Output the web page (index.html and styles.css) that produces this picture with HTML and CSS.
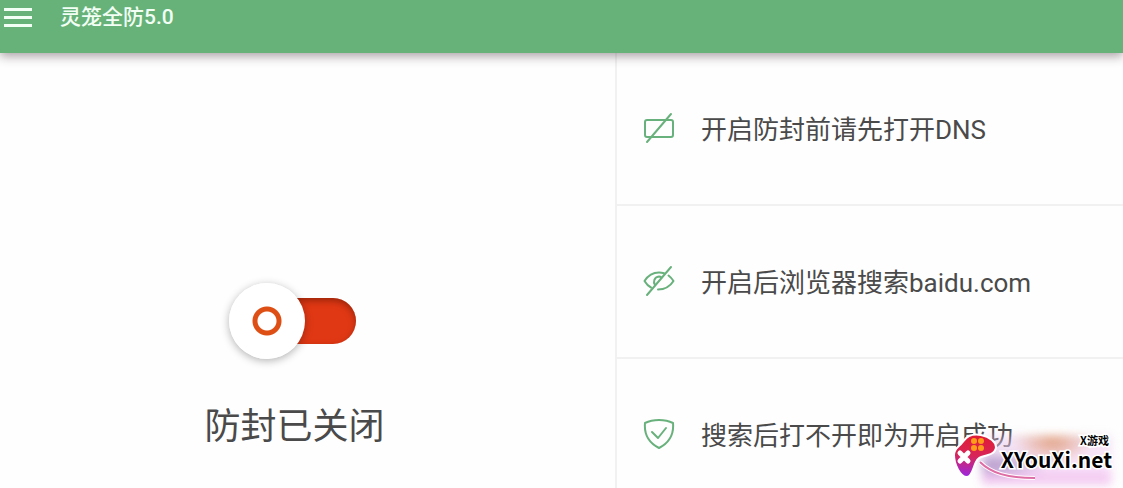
FILE: index.html
```
<!DOCTYPE html>
<html lang="zh-CN">
<head>
    <meta charset="UTF-8">
    <meta name="viewport" content="width=device-width, initial-scale=1.0">
    <title>灵笼全防5.0</title>
    <link rel="stylesheet" href="styles.css">
</head>
<body>

    <header class="toolbar">
        <button class="menu-btn" type="button" aria-label="菜单">
            <svg width="28" height="20" viewBox="0 0 28 20" fill="currentColor">
                <path d="M0 0h28v3H0zM0 8h28v3H0zM0 16h28v3H0z"/>
            </svg>
        </button>
        <h1 class="title">灵笼全防5.0</h1>
    </header>

    <main class="content">
        <section class="status">
            <input class="switch" type="checkbox" role="switch" id="guard">
            <label class="status-text" for="guard">防封已关闭</label>
        </section>

        <ul class="tips">
            <li class="tip">
                <svg class="tip-icon" viewBox="0 0 32 32">
                    <rect x="2" y="8" width="28" height="17" rx="2"/>
                    <path d="M4 30L28 2"/>
                </svg>
                <span>开启防封前请先打开DNS</span>
            </li>
            <li class="tip">
                <svg class="tip-icon" viewBox="0 0 32 32">
                    <path d="M8 22.500C5 21 3 18.500 1.500 16C5 10.500 10 7.500 16 7.500C18 7.500 19.500 7.800 21 8.300"/>
                    <path d="M25.500 10.500C27.500 12 29 13.700 30.500 16C27 21.500 22 24.500 15 24.500"/>
                    <path d="M12 20C10 17 11 12 16 11.500C17 11.500 17.500 11.600 18.500 12.500"/>
                    <path d="M4 30L28 2"/>
                </svg>
                <span>开启后浏览器搜索baidu.com</span>
            </li>
            <li class="tip">
                <svg class="tip-icon" viewBox="0 0 32 32">
                    <path d="M16 2C11 2 6 3 2 5C1 16 6 25 16 30C26 25 31 16 30 5C26 3 21 2 16 2Z"/>
                    <path d="M9 14L15 20L23 10"/>
                </svg>
                <span>搜索后打不开即为开启成功</span>
            </li>
        </ul>
    </main>

    <div class="watermark">
        <div class="haze"></div>
        <svg class="wire" width="60" height="20" viewBox="0 0 60 20" fill="none">
            <path d="M1 1C12 12 28 17 56 17" stroke="#fff" stroke-width="4"/>
            <path d="M1 1C12 12 28 17 56 17" stroke="#df6da5" stroke-width="2"/>
        </svg>
        <svg class="gamepad" width="46" height="48" viewBox="0 0 46 48">
            <defs>
                <linearGradient id="pad" x1="0.5" y1="0" x2="0.4" y2="1">
                    <stop offset="0" stop-color="#e01c34"/>
                    <stop offset="0.5" stop-color="#d82558"/>
                    <stop offset="1" stop-color="#9c27e0"/>
                </linearGradient>
            </defs>
            <path d="M17 4C24 1 34 3 40 8C47 14 44 21 36 23C30 25 26 25 24 30C21 36 20 45 15 45C8 45 2 32 2 23C2 17 6 15 9 12C12 9 13 6 17 4Z" fill="url(#pad)" stroke="#fff" stroke-width="2"/>
            <g fill="#ff9c1a">
                <circle cx="22" cy="9" r="3"/>
                <circle cx="29" cy="9" r="3"/>
                <circle cx="22" cy="16" r="3"/>
                <circle cx="29" cy="16" r="3"/>
            </g>
            <path d="M8 21L16 29M16 21L8 29" stroke="#fff" stroke-width="5" stroke-linecap="round"/>
        </svg>
        <div class="brand">
            <span class="brand-cn">X游戏</span>
            <span class="brand-url">XYouXi.net</span>
        </div>
    </div>

</body>
</html>
```
FILE: styles.css
```
* {
    box-sizing: border-box;
}
body {
    margin: 0;
    height: 100vh;
    display: flex;
    flex-direction: column;
    overflow: hidden;
    position: relative;
    font-family: Roboto, "Noto Sans CJK SC", sans-serif;
    color: #4a4a4a;
    background-color: #fefefe;
}
.toolbar {
    display: flex;
    align-items: center;
    gap: 28px;
    flex: none;
    padding: 0 4px 18px;
    background-color: #67b279;
    color: #f2fff4;
    box-shadow: 0 3px 10px rgba(60, 40, 50, 0.45);
    z-index: 1;
}
.menu-btn {
    display: flex;
    padding: 0;
    border: none;
    background: none;
    color: inherit;
    cursor: pointer;
}
.title {
    margin: 0;
    font-size: 21px;
    font-weight: 500;
    line-height: 35px;
}
.content {
    flex: 1;
    min-height: 0;
    display: grid;
    grid-template-columns: 615fr 508fr;
}
.status {
    display: flex;
    flex-direction: column;
    align-items: center;
    gap: 42px;
    padding: 230px 26px 0 0;
}
.switch {
    appearance: none;
    position: relative;
    width: 127px;
    height: 76px;
    margin: 0 4px 0 0;
    cursor: pointer;
}
/* track */
.switch::before {
    content: "";
    position: absolute;
    inset: 15px 0 15px 20px;
    border-radius: 23px;
    background-color: #e03814;
    box-shadow: inset 0 3px 6px rgba(90, 20, 0, 0.5);
}
/* knob */
.switch::after {
    content: "";
    position: absolute;
    top: 0;
    left: 0;
    width: 76px;
    height: 76px;
    border-radius: 50%;
    background: radial-gradient(circle, #fff 9px, #dd4f14 10px, #dd4f14 14px, #fff 15px);
    box-shadow: 0 2px 9px rgba(0, 0, 0, 0.3);
}
.status-text {
    font-size: 36px;
    line-height: 52px;
}
.tips {
    margin: 0;
    padding: 0;
    list-style: none;
    border-left: 2px solid #f1f1f1;
}
.tip {
    display: flex;
    align-items: center;
    gap: 26px;
    height: 153px;
    padding: 0 0 2px 26px;
    border-bottom: 2px solid #f1f1f1;
    font-size: 26px;
    white-space: nowrap;
}
.tip-icon {
    flex: none;
    width: 32px;
    height: 32px;
    fill: none;
    stroke: #69b17c;
    stroke-width: 2;
    stroke-linecap: round;
    stroke-linejoin: round;
}
/* site mark over the bottom right corner */
.watermark {
    position: absolute;
    right: 0;
    bottom: 0;
    width: 171px;
    height: 56px;
    z-index: 2;
}
.haze {
    position: absolute;
    inset: 4px 12px 4px 30px;
    background:
        radial-gradient(ellipse at 55% 5%, rgba(220, 140, 95, 0.8), transparent 40%),
        radial-gradient(ellipse at 8% 60%, rgba(125, 95, 165, 0.6), transparent 35%),
        linear-gradient(rgba(222, 178, 222, 0.4), rgba(248, 225, 250, 0.8) 60%, rgba(236, 170, 232, 0.8));
    filter: blur(5px);
}
.gamepad {
    position: absolute;
    left: 0;
    top: 0;
}
.wire {
    position: absolute;
    left: 27px;
    top: 29px;
}
.brand {
    position: absolute;
    right: 11px;
    top: 0;
    display: flex;
    flex-direction: column;
    align-items: flex-end;
    font-family: "Noto Sans CJK SC", sans-serif;
    font-weight: 700;
    color: #000;
    -webkit-text-stroke: 3px #fff;
    paint-order: stroke fill;
}
.brand-cn {
    padding-right: 3px;
    font-size: 11px;
    line-height: 16px;
}
.brand-url {
    font-size: 21px;
    line-height: 23px;
}
```
